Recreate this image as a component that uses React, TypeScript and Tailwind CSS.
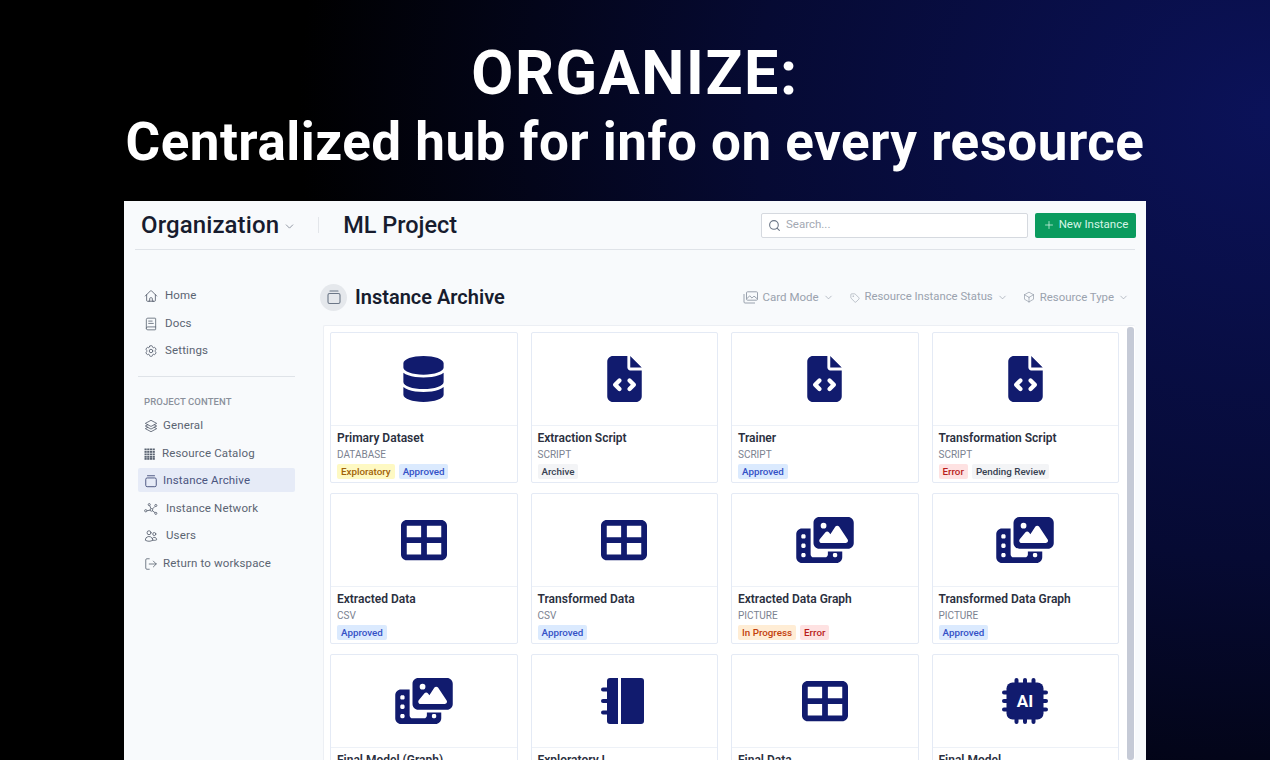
import { BookText, ChevronDown, LogOut, Plus, Search, Tag } from "lucide-react";
import type { ReactNode } from "react";
import { FaDatabase, FaFileCode, FaPhotoFilm, FaTableCellsLarge } from "react-icons/fa6";
import {
    HiOutlineCog6Tooth,
    HiOutlineCube,
    HiOutlineHome,
    HiOutlineSquare3Stack3D,
    HiOutlineUsers,
} from "react-icons/hi2";

const ArchiveIcon = ({ className }: { className?: string }) => (
    <svg viewBox="0 0 16 16" fill="none" stroke="currentColor" strokeWidth="1.1" className={className}>
        <rect x="2" y="4.5" width="12" height="10" rx="1.6" />
        <path d="M4 2h8" strokeLinecap="round" />
    </svg>
);

const GridDense = ({ className }: { className?: string }) => (
    <svg viewBox="0 0 12 12" fill="currentColor" className={className}>
        {[0.5, 3, 5.5, 8, 10].map((y) =>
            [0.5, 3.2, 5.9, 8.6].map((x) => <rect key={`${x}-${y}`} x={x} y={y} width="2.2" height="1.8" />),
        )}
    </svg>
);

const NetworkIcon = ({ className }: { className?: string }) => (
    <svg viewBox="0 0 16 16" fill="none" stroke="currentColor" strokeWidth="1" className={className}>
        <circle cx="2" cy="10" r="1.3" />
        <circle cx="8.5" cy="9" r="1.5" />
        <circle cx="13.5" cy="4" r="1.2" />
        <circle cx="13.5" cy="13" r="1.2" />
        <circle cx="6" cy="3" r="1.2" />
        <path d="M3.3 10l3.7-.7M9.6 8l3-3M9.6 10l3 2.2M6.6 4.2l1.3 3.4" />
    </svg>
);

const CardModeIcon = ({ className }: { className?: string }) => (
    <svg viewBox="0 0 15 13" fill="none" stroke="currentColor" strokeWidth="1" className={className}>
        <rect x="3.5" y="0.8" width="11" height="8.4" rx="1" />
        <path d="M1 3v8a1 1 0 0 0 1 1h10" />
        <path d="M3.5 8l3.2-3.2 2.3 2.3 2-2L14.5 8" />
    </svg>
);

const NotebookIcon = () => (
    <svg viewBox="0 0 43 46" fill="#111b6e" className="-ml-[3px] h-[46px] w-[43px]">
        <path d="M6 3a3 3 0 0 1 3-3h8v46H9a3 3 0 0 1-3-3V3z" />
        <path d="M20 0h20a3 3 0 0 1 3 3v40a3 3 0 0 1-3 3H20V0z" />
        <rect x="0" y="9.5" width="8" height="4" rx="2" />
        <rect x="0" y="21" width="8" height="4" rx="2" />
        <rect x="0" y="32.5" width="8" height="4" rx="2" />
    </svg>
);

const ChipIcon = () => (
    <svg viewBox="0 0 46 46" className="h-[46px] w-[46px]">
        <g fill="#111b6e">
            {[12.5, 21, 29.5].map((p) => (
                <g key={p}>
                    <rect x={p} y="0" width="4" height="46" rx="2" />
                    <rect x="0" y={p} width="46" height="4" rx="2" />
                </g>
            ))}
            <rect x="4.5" y="4.5" width="37" height="37" rx="6" />
        </g>
        <text x="23" y="29" textAnchor="middle" fill="#fff" fontSize="17" fontWeight="700" fontFamily="Roboto, sans-serif">
            AI
        </text>
    </svg>
);

const iconClass = "text-[#111b6e]";
const Db = () => <FaDatabase className={`h-[46px] w-[41px] ${iconClass}`} />;
const Code = () => <FaFileCode className={`h-[46px] w-[35px] ${iconClass}`} />;
const Table = () => <FaTableCellsLarge className={`h-[46px] w-[46px] ${iconClass}`} />;
const Photo = () => <FaPhotoFilm className={`h-[46px] w-[58px] ${iconClass}`} />;

const badgeStyles: Record<string, string> = {
    Exploratory: "bg-[#fef9c3] text-[#a16207]",
    Approved: "bg-[#dbeafe] text-[#3451c6]",
    Archive: "bg-[#f3f4f6] text-[#374151]",
    "Pending Review": "bg-[#f3f4f6] text-[#374151]",
    Error: "bg-[#fee2e2] text-[#b91c1c]",
    "In Progress": "bg-[#ffedd5] text-[#c2410c]",
};

const cards: { name: string; type: string; badges: string[]; icon: ReactNode }[] = [
    { name: "Primary Dataset", type: "DATABASE", badges: ["Exploratory", "Approved"], icon: <Db /> },
    { name: "Extraction Script", type: "SCRIPT", badges: ["Archive"], icon: <Code /> },
    { name: "Trainer", type: "SCRIPT", badges: ["Approved"], icon: <Code /> },
    { name: "Transformation Script", type: "SCRIPT", badges: ["Error", "Pending Review"], icon: <Code /> },
    { name: "Extracted Data", type: "CSV", badges: ["Approved"], icon: <Table /> },
    { name: "Transformed Data", type: "CSV", badges: ["Approved"], icon: <Table /> },
    { name: "Extracted Data Graph", type: "PICTURE", badges: ["In Progress", "Error"], icon: <Photo /> },
    { name: "Transformed Data Graph", type: "PICTURE", badges: ["Approved"], icon: <Photo /> },
    { name: "Final Model (Graph)", type: "", badges: [], icon: <Photo /> },
    { name: "Exploratory I", type: "", badges: [], icon: <NotebookIcon /> },
    { name: "Final Data", type: "", badges: [], icon: <Table /> },
    { name: "Final Model", type: "", badges: [], icon: <ChipIcon /> },
];

const NavItem = ({
    icon,
    label,
    gap,
    active,
}: {
    icon: ReactNode;
    label: string;
    gap: string;
    active?: boolean;
}) => (
    <div
        className={`flex h-[24px] items-center rounded-[2px] pt-[2px] pl-[6px] text-[11.5px] tracking-[0.15px] ${gap} ${
            active ? "bg-[#e6ebf7] text-[#4b5580]" : "text-[#5b6472]"
        }`}
    >
        {icon}
        <span>{label}</span>
    </div>
);

const Filter = ({ icon, label, text }: { icon: ReactNode; label: string; text: string }) => (
    <div className={`flex items-center gap-[5px] text-[#9aa2ae] ${text}`}>
        {icon}
        <span>{label}</span>
        <ChevronDown className="-ml-[1px] h-[11px] w-[11px]" strokeWidth={1.5} />
    </div>
);

const Card = ({ name, type, badges, icon }: (typeof cards)[number]) => (
    <div className="h-[151px] overflow-hidden rounded-[2px] border border-[#e4eaf5] bg-white">
        <div className="flex h-[93px] items-center justify-center border-b border-[#edf1f7]">{icon}</div>
        <div className="px-[6px] pt-[5px]">
            <div className="text-[12px] leading-[15px] font-semibold text-[#2b3040]">{name}</div>
            <div className="mt-[2px] h-[13px] text-[10px] leading-[13px] text-[#7b8290]">{type}</div>
            <div className="mt-[2.5px] flex gap-[4px]">
                {badges.map((b) => (
                    <span
                        key={b}
                        className={`rounded-[2px] px-[4px] text-[9.8px] leading-[15px] font-medium ${badgeStyles[b]}`}
                    >
                        {b}
                    </span>
                ))}
            </div>
        </div>
    </div>
);

export default function App() {
    const smallIcon = "h-[14px] w-[14px] shrink-0";
    return (
        <div className="flex h-[760px] w-full flex-col items-center overflow-hidden bg-[radial-gradient(ellipse_90%_130%_at_100%_15%,#0b1259_0%,#060a33_45%,#000000_85%)] font-['Roboto',sans-serif]">
            <h1 className="mt-[38px] text-center font-bold text-white">
                <div className="text-[61px] leading-[70px] tracking-[1.6px]">ORGANIZE:</div>
                <div className="text-[53px] leading-[68px] tracking-[0.47px]">Centralized hub for info on every resource</div>
            </h1>
            <div className="mt-[25px] flex w-[1022px] flex-1 flex-col overflow-hidden bg-[#f8fafc] px-[11px]">
                <div className="flex h-[49px] shrink-0 items-center border-b border-[#dfe3e8] pl-[6px]">
                    <span className="text-[24px] font-medium tracking-[0.1px] text-[#171c2e]">Organization</span>
                    <ChevronDown className="mt-[3px] ml-[4px] h-[13px] w-[13px] text-[#7b8290]" strokeWidth={1.5} />
                    <div className="mr-[24px] ml-[22px] h-[16px] w-px bg-[#e3e6ea]" />
                    <span className="mt-[2px] text-[23.5px] font-medium text-[#171c2e]">ML Project</span>
                    <div className="ml-auto flex h-[25px] w-[267px] items-center gap-[5px] rounded-[2px] border border-[#d5d9df] bg-white pl-[6px]">
                        <Search className="h-[13px] w-[13px] text-[#6b7686]" strokeWidth={2} />
                        <span className="text-[11.5px] text-[#a3a9b3]">Search...</span>
                    </div>
                    <div className="-mr-[1px] ml-[7px] flex h-[25px] w-[101px] items-center justify-center gap-[4px] rounded-[2px] bg-[#0a9b5e] text-[11.5px] text-[#d6f5e6]">
                        <Plus className="h-[12px] w-[12px]" strokeWidth={1.5} />
                        New Instance
                    </div>
                </div>
                <div className="flex min-h-0 flex-1">
                    <aside className="mr-[28px] ml-[3px] w-[157px] shrink-0 pt-[33px]">
                        <div className="flex flex-col gap-[3.5px]">
                            <NavItem gap="gap-[7px]" icon={<HiOutlineHome className={smallIcon} />} label="Home" />
                            <NavItem gap="gap-[7px]" icon={<BookText className={smallIcon} strokeWidth={1.4} />} label="Docs" />
                            <NavItem gap="gap-[7px]" icon={<HiOutlineCog6Tooth className={smallIcon} />} label="Settings" />
                        </div>
                        <div className="mt-[14px] border-t border-[#dfe3e8]" />
                        <div className="mt-[19px] pl-[6px] text-[9.5px] leading-[12px] font-medium tracking-[0.1px] text-[#8a909b]">
                            PROJECT CONTENT
                        </div>
                        <div className="mt-[5px] flex flex-col gap-[3.5px]">
                            <NavItem gap="gap-[5px]" icon={<HiOutlineSquare3Stack3D className={smallIcon} />} label="General" />
                            <NavItem gap="gap-[6px]" icon={<GridDense className="h-[12px] w-[12px] shrink-0" />} label="Resource Catalog" />
                            <NavItem active gap="gap-[5px]" icon={<ArchiveIcon className={smallIcon} />} label="Instance Archive" />
                            <NavItem gap="gap-[8px]" icon={<NetworkIcon className={smallIcon} />} label="Instance Network" />
                            <NavItem gap="gap-[8px]" icon={<HiOutlineUsers className={smallIcon} />} label="Users" />
                            <NavItem gap="gap-[5px]" icon={<LogOut className={smallIcon} strokeWidth={1.4} />} label="Return to workspace" />
                        </div>
                    </aside>
                    <main className="flex min-w-0 flex-1 flex-col">
                        <div className="flex h-[75px] shrink-0 items-center pt-[19px]">
                            <div className="-ml-[3px] flex h-[27px] w-[27px] items-center justify-center rounded-full bg-[#e5e8ec]">
                                <ArchiveIcon className="h-[16px] w-[16px] text-[#6b7686]" />
                            </div>
                            <span className="ml-[8px] text-[20px] font-semibold text-[#171c2e]">Instance Archive</span>
                            <div className="mt-[1px] ml-auto flex items-center gap-[12px] pr-[6px]">
                                <div className="mr-[4px]">
                                    <Filter text="text-[11.5px]" icon={<CardModeIcon className="h-[13px] w-[15px]" />} label="Card Mode" />
                                </div>
                                <Filter text="text-[11.3px]" icon={<Tag className="h-[10px] w-[10px]" strokeWidth={1.5} />} label="Resource Instance Status" />
                                <div className="ml-[3px]">
                                    <Filter text="text-[11.4px]" icon={<HiOutlineCube className="h-[12px] w-[12px]" />} label="Resource Type" />
                                </div>
                            </div>
                        </div>
                        <div className="flex min-h-0 flex-1 gap-[8px] rounded-t-[2px] border-t border-l border-[#eceff4] bg-white pt-[6px] pl-[6px]">
                            <div className="grid flex-1 grid-cols-4 content-start gap-x-[13px] gap-y-[10px]">
                                {cards.map((c) => (
                                    <Card key={c.name} {...c} />
                                ))}
                            </div>
                            <div className="mr-[1px] -mt-[5px] w-[7px] shrink-0 rounded-[3px] bg-[#c5cad6]" />
                        </div>
                    </main>
                </div>
            </div>
        </div>
    );
}
